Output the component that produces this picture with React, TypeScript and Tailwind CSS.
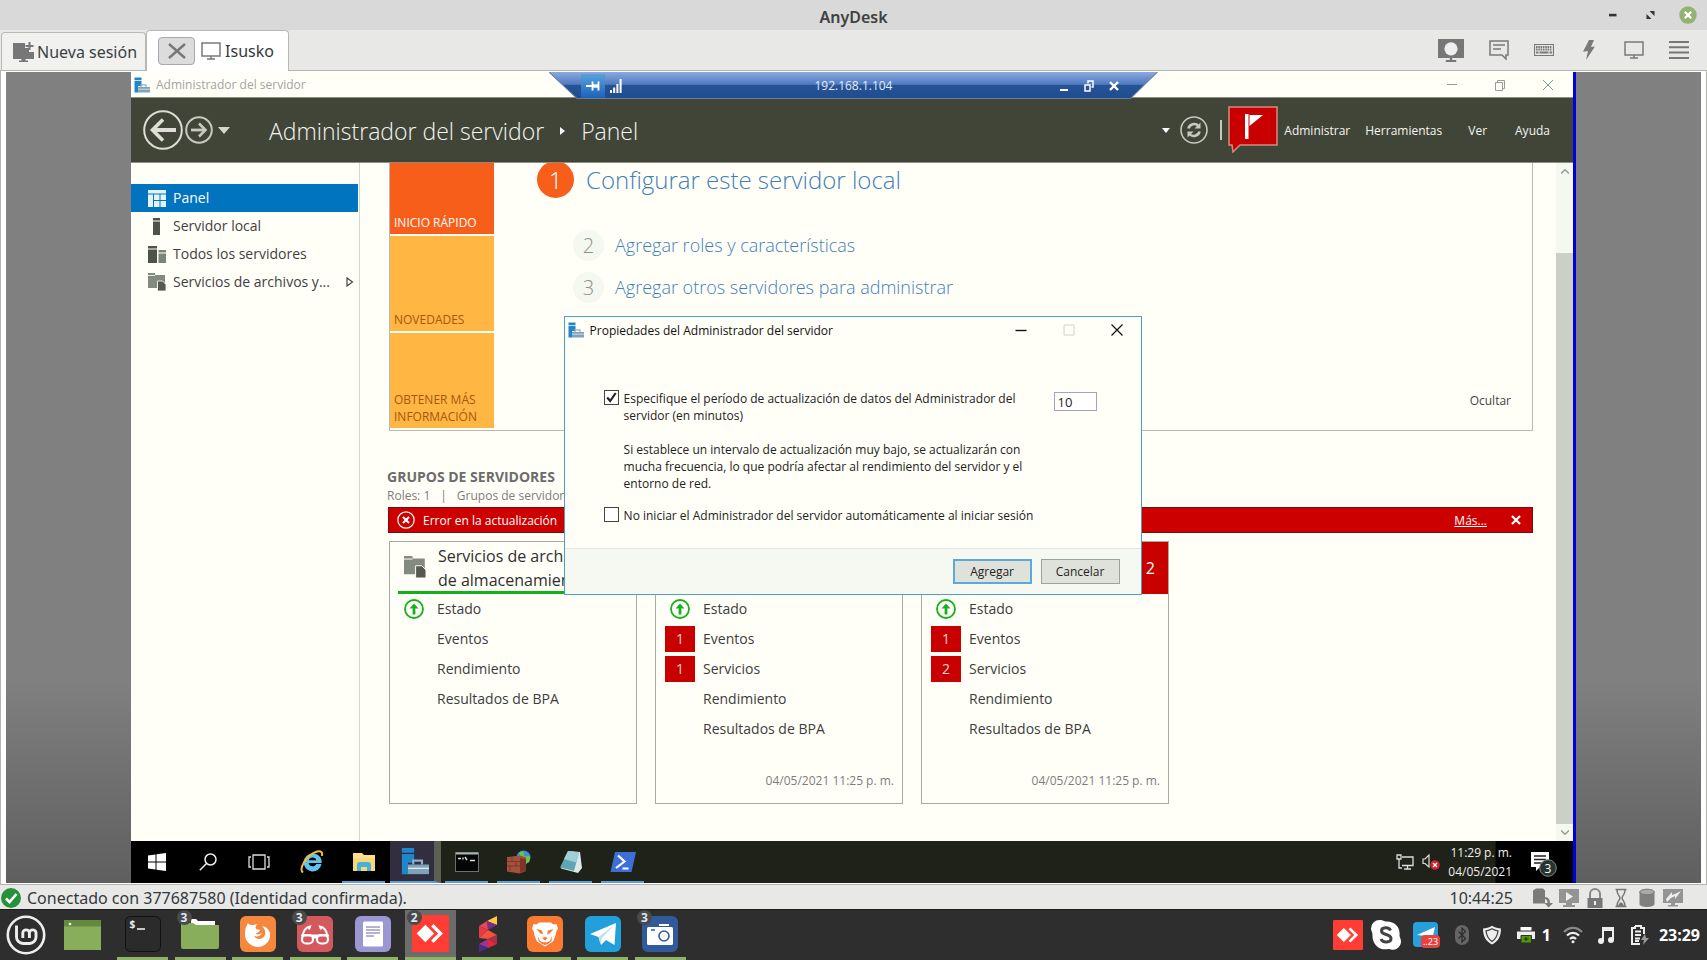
import React from "react";

type Row = { label: string; ok?: boolean; count?: number };
type Tile = { id: string; title?: string[]; badge?: string; rows: Row[]; date?: string };

const serverTiles: Tile[] = [
  {
    id: "archivos",
    title: ["Servicios de arch", "de almacenamien"],
    rows: [
      { label: "Estado", ok: true },
      { label: "Eventos" },
      { label: "Rendimiento" },
      { label: "Resultados de BPA" },
    ],
  },
  {
    id: "local",
    rows: [
      { label: "Estado", ok: true },
      { label: "Eventos", count: 1 },
      { label: "Servicios", count: 1 },
      { label: "Rendimiento" },
      { label: "Resultados de BPA" },
    ],
    date: "04/05/2021 11:25 p. m.",
  },
  {
    id: "todos",
    badge: "2",
    rows: [
      { label: "Estado", ok: true },
      { label: "Eventos", count: 1 },
      { label: "Servicios", count: 2 },
      { label: "Rendimiento" },
      { label: "Resultados de BPA" },
    ],
    date: "04/05/2021 11:25 p. m.",
  },
];

/* ---------- AnyDesk window ---------- */

function MonitorIcon({ className = "h-[18px] w-5" }: { className?: string }) {
  return (
    <svg viewBox="0 0 20 18" className={className} fill="none" stroke="#7a7a7a" strokeWidth="1.5">
      <rect x="1" y="1" width="18" height="13" />
      <path d="M10 14v3M6 17h8" />
    </svg>
  );
}

function TitleBar() {
  return (
    <header className="grid h-[30px] grid-cols-[1fr_auto_1fr] items-center bg-[#d9d9d9]">
      <span />
      <h1 className="pt-[3px] text-base font-semibold leading-5 text-[#404040]">AnyDesk</h1>
      <div className="flex items-center justify-end gap-[22px] pr-2.5">
        <button aria-label="Minimizar" className="flex size-4 items-center justify-center">
          <svg viewBox="0 0 16 16" className="size-4"><rect x="6" y="6.8" width="7.5" height="2.6" fill="#333" /></svg>
        </button>
        <button aria-label="Restaurar" className="flex size-4 items-center justify-center">
          <svg viewBox="0 0 16 16" className="size-4" fill="#333"><path d="M8.500 4h5v5zM5.500 7v5h5z" /></svg>
        </button>
        <button aria-label="Cerrar" className="flex size-[18px] items-center justify-center">
          <svg viewBox="0 0 18 18" className="size-[18px]">
            <circle cx="9" cy="9" r="8.7" fill="#92b372" />
            <path d="M5.8 5.8l6.4 6.4M12.2 5.8l-6.4 6.4" stroke="#fff" strokeWidth="2.2" />
          </svg>
        </button>
      </div>
    </header>
  );
}

function TabBar() {
  return (
    <div className="flex h-[41px] items-end border-b border-[#b4b4b0] bg-[#e8e8e6]">
      <button className="ml-px flex h-[38px] items-center gap-[3px] rounded-t border border-b-0 border-[#b8b8b4] bg-[#f1f1f0] pl-[11px] pr-2 text-base leading-5 text-[#3a3f44]">
        <svg viewBox="0 0 21 20" className="h-5 w-[21px]" fill="#777">
          <path d="M0 1h12v5h4v4h5v7h-8.500v1.500H15V20H6v-1.500h2.500V17H0z" />
          <path d="M16.500 0v8M12.500 4h8" stroke="#777" strokeWidth="2" />
        </svg>
        Nueva sesión
      </button>
      <div className="-mb-px flex h-[41px] items-center gap-1 rounded-t border border-b-0 border-[#b8b8b4] bg-white pl-[11px] pr-3.5">
        <button aria-label="Cerrar sesión" className="mr-0.5 flex h-7 w-[37px] items-center justify-center rounded border border-[#a9a9a9] bg-[#dcdcdc]">
          <svg viewBox="0 0 18 16" className="h-4 w-[18px]" stroke="#777" strokeWidth="2.4"><path d="M1 1l16 14M17 1L1 15" /></svg>
        </button>
        <MonitorIcon />
        <span className="text-base leading-5 text-[#33383d]">Isusko</span>
      </div>
      <div className="ml-auto flex h-full items-center gap-[25px] pr-[18px]">
        <button aria-label="Grabar">
          <svg viewBox="0 0 26 23" className="h-[23px] w-[26px]" fill="#777">
            <path d="M0 0h26v19H0z" /><circle cx="13" cy="9.8" r="6.6" fill="#eee" /><path d="M11.8 19h2.400v2h4v2H7.800v-2h4z" />
          </svg>
        </button>
        <button aria-label="Chat">
          <svg viewBox="0 0 20 20" className="h-5 w-5" fill="none" stroke="#7a7a7a" strokeWidth="1.5">
            <path d="M1 1h18v14h-2v4l-4-4H1zM4 5h12M4 9h8" />
          </svg>
        </button>
        <button aria-label="Teclado">
          <svg viewBox="0 0 20 12" className="h-3 w-5" fill="none" stroke="#7a7a7a">
            <path d="M.5.5h19v11H.5z" strokeWidth="1.2" />
            <path d="M2 3h16M2 5.500h16" strokeWidth="1.8" strokeDasharray="1.6 .7" />
            <path d="M2 8.500h2.500M5.500 8.500h9M15.500 8.500H18" strokeWidth="1.8" />
          </svg>
        </button>
        <button aria-label="Acciones" className="px-1">
          <svg viewBox="0 0 12 20" className="h-5 w-3" fill="#7a7a7a"><path d="M6 0h5L8 7l4-.5L3 20l2-9-5 .8z" /></svg>
        </button>
        <button aria-label="Pantalla"><MonitorIcon /></button>
        <button aria-label="Menú">
          <svg viewBox="0 0 20 18" className="h-[18px] w-5" stroke="#777" strokeWidth="2"><path d="M0 1h20M0 6.300h20M0 11.600h20M0 17h20" /></svg>
        </button>
      </div>
    </div>
  );
}

function StatusBar() {
  return (
    <div className="flex h-[25px] items-center border-t border-[#b4b4b0] bg-[#e8e8e6] pl-px pr-6 pt-px">
      <svg viewBox="0 0 20 20" className="size-5">
        <circle cx="10" cy="10" r="10" fill="#27913a" />
        <path d="M5 10.500l3.500 3.500L15.500 6" stroke="#fff" strokeWidth="2.6" fill="none" />
      </svg>
      <span className="ml-1.5 text-base leading-5 text-[#33383d]">Conectado con 377687580 (Identidad confirmada).</span>
      <span className="ml-auto text-base leading-5 text-[#33383d]">10:44:25</span>
      <div className="ml-5 flex items-center gap-1.5">
        <svg viewBox="0 0 20 20" className="size-5" fill="#7a7a7a"><path d="M0 2.500L3 .500h7l2 2v13H0z" /><path d="M12 9c3.500 0 5 3 5 6h3l-4.500 4.500L11.500 15h3c0-2-.5-3.500-2.500-4z" /></svg>
        <svg viewBox="0 0 20 20" className="size-5"><path d="M0 1h20v14h-7v2h3v2H4v-2h3v-2H0z" fill="#949494" /><path d="M7 4l7 4.500L7 13z" fill="#eee" /></svg>
        <svg viewBox="0 0 20 20" className="size-5"><path d="M2.500 10h15v10h-15z" fill="#777" /><path d="M5 10V6a5 5 0 0110 0v4" fill="none" stroke="#888" strokeWidth="2" /><path d="M10 13v4" stroke="#eee" strokeWidth="2" /></svg>
        <svg viewBox="0 0 20 20" className="size-5" fill="none" stroke="#777" strokeWidth="1.5"><path d="M4.500 1.500h11M4.500 18.500h11M6 2c0 5 3 6 3 8s-3 3-3 8M14 2c0 5-3 6-3 8s3 3 3 8" /><path d="M7 18c1-3 2-3 3-4 1 1 2 1 3 4z" fill="#777" stroke="none" /></svg>
        <svg viewBox="0 0 20 20" className="size-5"><path d="M2.500 4v12c0 4 15 4 15 0V4z" fill="#808080" /><ellipse cx="10" cy="4" rx="7.3" ry="2.8" fill="#aaa" stroke="#777" /></svg>
        <svg viewBox="0 0 20 20" className="size-5"><path d="M0 1h20v14h-8v2h3v1.500H5V17h3v-2H0z" fill="#949494" /><path d="M3 11l6-7v3l3-1 6-3-6 8v-3l-4 2-4 4z" fill="#eee" /></svg>
      </div>
    </div>
  );
}

/* ---------- Remote Windows desktop ---------- */

function ServerManagerIcon({ className = "size-4" }: { className?: string }) {
  return (
    <svg viewBox="0 0 16 16" className={className}>
      <path d="M.5.5h7v2.800h-7zM.5 4h7v5H4v6.500H.5z" fill="#1f87c9" />
      <path d="M7 10V7.800h5V10" fill="none" stroke="#8fb0c4" strokeWidth="1.2" />
      <path d="M4 10h12v5.500H4z" fill="#7fa3b8" />
      <path d="M4 12.200h12" stroke="#dfeaf0" strokeWidth=".8" />
    </svg>
  );
}

function FolderServerIcon({ className = "size-[18px]" }: { className?: string }) {
  return (
    <svg viewBox="0 0 18 18" className={className}>
      <path d="M0 0h7v2h10v8H9v5H0z" fill="#858a7e" />
      <path d="M0 2.500h7" stroke="#fffff8" strokeWidth=".8" />
      <path d="M9.500 8h5l3.500 3.500V18H9.500z" fill="#55594e" stroke="#fffff8" strokeWidth=".8" />
    </svg>
  );
}

function RemoteTitle() {
  return (
    <div className="flex h-[25px] items-center bg-[#fffff8] pl-[3px] text-[#a3a3a3]">
      <ServerManagerIcon />
      <span className="ml-1.5 text-xs leading-4">Administrador del servidor</span>
      <div className="ml-auto flex items-center gap-9 pr-[19px]">
        <svg viewBox="0 0 12 12" className="size-3" stroke="#9a9a94"><path d="M1 5.500h10" /></svg>
        <svg viewBox="0 0 12 12" className="size-3" fill="none" stroke="#9a9a94"><path d="M1.500 3.500h7v8h-7zM3.500 3.500v-2h7v8h-2" /></svg>
        <svg viewBox="0 0 12 12" className="size-3" stroke="#7f9899"><path d="M1 1l10 10M11 1L1 11" /></svg>
      </div>
    </div>
  );
}

function ConnectionBar() {
  return (
    <div className="absolute left-[29%] right-[28.8%] top-0 h-[27px] text-white">
      <svg viewBox="0 0 608 27" preserveAspectRatio="none" className="absolute inset-0 size-full">
        <defs>
          <linearGradient id="rdp" x1="0" y1="0" x2="0" y2="1">
            <stop offset="0" stopColor="#8aaae0" />
            <stop offset=".47" stopColor="#4f7abf" />
            <stop offset=".48" stopColor="#265497" />
            <stop offset="1" stopColor="#1f4c8f" />
          </linearGradient>
        </defs>
        <path d="M0 0h608l-27 26.500H28z" fill="url(#rdp)" />
        <path d="M0 0l28 26.500h553L608 0" fill="none" stroke="#6a7f9f" />
      </svg>
      <div className="relative grid h-[27px] grid-cols-[1fr_auto_1fr] items-center">
        <div className="flex items-center pl-8">
          <button aria-label="Anclar" className="flex h-6 w-6 items-center justify-center bg-linear-to-b from-[#5aa2dc] to-[#1c62b8]">
            <svg viewBox="0 0 14 12" className="h-3 w-3.5" stroke="#fff" strokeWidth="1.8" fill="none"><path d="M0 6h6M6.500 1.500v9M12.500 1.500v9" /><path d="M6 6h6" strokeWidth="3.4" /></svg>
          </button>
          <svg viewBox="0 0 12 14" className="ml-[5px] h-3.5 w-3 fill-white"><path d="M0 11h2v3H0zM3.200 8.500h2V14h-2zM6.400 5h2v9h-2zM9.600 0h2v14h-2z" /></svg>
        </div>
        <span className="pt-px text-xs leading-4 text-[#e3ecf7]">192.168.1.104</span>
        <div className="flex items-center justify-end gap-[15px] pr-[39px]">
          <svg viewBox="0 0 10 12" className="h-3 w-2.5"><path d="M1 10h8" stroke="#fff" strokeWidth="2" /></svg>
          <svg viewBox="0 0 10 12" className="h-3 w-2.5" fill="none" stroke="#fff" strokeWidth="1.5"><path d="M1 5h5v6H1zM4 3.500V1h5v6H7.500" /></svg>
          <svg viewBox="0 0 10 10" className="size-2.5"><path d="M1 1l8 8M9 1L1 9" stroke="#fff" strokeWidth="2.4" /></svg>
        </div>
      </div>
    </div>
  );
}

function NavHeader() {
  return (
    <div className="flex h-[66px] items-center border-y border-[#8b8d82] bg-[#414538] pl-3 text-[#f4f4f0]">
      <button aria-label="Atrás">
        <svg viewBox="0 0 40 40" className="size-10" fill="none" stroke="#deded6">
          <circle cx="20" cy="20" r="18.8" strokeWidth="2" />
          <path d="M33 20H10" strokeWidth="4" /><path d="M20 9.500L9.500 20 20 30.500" strokeWidth="3.6" />
        </svg>
      </button>
      <button aria-label="Adelante" className="ml-0.5">
        <svg viewBox="0 0 28 28" className="size-7" fill="none" stroke="#c9c9c0">
          <circle cx="14" cy="14" r="12.8" strokeWidth="2" />
          <path d="M6 14h14" strokeWidth="2.8" /><path d="M14 7.500l6.500 6.500-6.500 6.500" strokeWidth="2.6" />
        </svg>
      </button>
      <button aria-label="Historial" className="ml-[5px]">
        <svg viewBox="0 0 12 7" className="h-[7px] w-3 fill-[#d6d6ce]"><path d="M0 0h12L6 7z" /></svg>
      </button>
      <nav className="ml-[39px] flex items-center pt-0.5 text-[23px] font-light leading-8">
        <span>Administrador del servidor</span>
        <svg viewBox="0 0 5 8" className="mx-4 h-2 w-[5px] fill-white"><path d="M0 0l5 4-5 4z" /></svg>
        <span>Panel</span>
      </nav>
      <div className="ml-auto flex items-center pr-[23px] text-xs leading-5">
        <svg viewBox="0 0 8 5" className="h-[5px] w-2 fill-white"><path d="M0 0h8L4 5z" /></svg>
        <button aria-label="Actualizar" className="ml-2.5">
          <svg viewBox="0 0 28 28" className="size-7" fill="none" stroke="#c6c9bf">
            <circle cx="14" cy="14" r="13" strokeWidth="1.6" />
            <path d="M8.500 12.500c1-4.500 7-6 10-2.500M19.500 15.500c-1 4.500-7 6-10 2.500" strokeWidth="2.6" />
            <path d="M20.500 6.500v6h-6zM7.500 21.500v-6h6z" fill="#c6c9bf" stroke="none" />
          </svg>
        </button>
        <span className="ml-3 h-5 w-0.5 bg-[#c6c9bf]" />
        <button aria-label="Notificaciones" className="ml-1.5">
          <svg viewBox="0 0 50 48" className="h-12 w-[50px]">
            <path d="M1 1h48v38H12l-7 7-1-7H1z" fill="#c80000" stroke="#d58a80" strokeWidth="1.5" />
            <path d="M17 8h3.500v25H17zM21.500 9H35L21.500 20z" fill="#fff" />
          </svg>
        </button>
        <button className="ml-1.5 pt-px">Administrar</button>
        <button className="ml-[15px] pt-px">Herramientas</button>
        <button className="ml-[26px] pt-px">Ver</button>
        <button className="ml-7 pt-px">Ayuda</button>
      </div>
    </div>
  );
}

function Sidebar() {
  const row = "flex h-7 items-center gap-[7px] pl-[17px] text-sm leading-5";
  return (
    <aside className="w-[229px] shrink-0 border-r border-[#d2d5cc] pt-[21px] text-[#3f3f3f]">
      <ul className="flex flex-col">
        <li className="mr-px flex h-7 items-center gap-[7px] bg-[#0074bf] pl-[17px] text-sm leading-5 text-white">
          <svg viewBox="0 0 18 17" className="h-[17px] w-[18px] fill-[#e4f3fb]"><path d="M0 0h18v3.500H0zM0 4.500h5V17H0zM6 4.500h5.500V10H6zM12.500 4.500H18V10h-5.500zM6 11h5.500v6H6zM12.500 11H18v6h-5.500z" /></svg>
          <a href="#panel">Panel</a>
        </li>
        <li className={row}>
          <svg viewBox="0 0 18 17" className="h-[17px] w-[18px] fill-[#4e5247]"><path d="M5 0h7v2.500H5zM5 3.500h7V17H5z" /></svg>
          <a href="#local">Servidor local</a>
        </li>
        <li className={row}>
          <svg viewBox="0 0 18 17" className="h-[17px] w-[18px]" fill="#4e5247"><path d="M0 0h9v2.500H0zM0 3.500h9V17H0z" /><path d="M10.500 4H18v2.500h-7.500zM10.500 7.500H18V17h-7.500z" fill="#7e8377" /></svg>
          <a href="#todos">Todos los servidores</a>
        </li>
        <li className={row}>
          <FolderServerIcon />
          <a href="#archivos">Servicios de archivos y...</a>
          <svg viewBox="0 0 8 10" className="ml-auto mr-[5px] h-2.5 w-2" fill="none" stroke="#444" strokeWidth="1.2"><path d="M1 1l5.500 4L1 9z" /></svg>
        </li>
      </ul>
    </aside>
  );
}

function WelcomePanel() {
  const steps = [
    { n: "2", text: "Agregar roles y características" },
    { n: "3", text: "Agregar otros servidores para administrar" },
  ];
  return (
    <section className="flex h-[268px] border border-t-0 border-[#b9bbb2]">
      <div className="flex w-[104px] shrink-0 flex-col gap-0.5 text-xs leading-[17px] text-[#a8560c]">
        <button className="flex h-[71px] items-end bg-[#f65e1a] px-1 pb-[3px] text-left text-white">INICIO RÁPIDO</button>
        <button className="flex h-[95px] items-end bg-[#ffb643] px-1 pb-[3px] text-left">NOVEDADES</button>
        <button className="flex h-[95px] items-end bg-[#ffb643] px-1 pb-[3px] text-left">OBTENER MÁS INFORMACIÓN</button>
      </div>
      <div className="relative flex-1 overflow-hidden pl-[43px] text-[#3f7fb9]">
        <a href="#configurar" className="-mt-0.5 flex items-center gap-3 text-2xl font-light leading-9">
          <span className="flex size-[37px] items-center justify-center rounded-full bg-[#f65e1a] text-2xl text-white">1</span>
          Configurar este servidor local
        </a>
        <ul className="mt-8 flex flex-col gap-[11px] pl-9 text-lg font-light leading-[31px]">
          {steps.map((s) => (
            <li key={s.n}>
              <a href="#paso" className="flex items-center gap-[11px]">
                <span className="flex size-[31px] items-center justify-center rounded-full bg-[#f5f8ee] text-xl text-[#8f8f8f]">{s.n}</span>
                {s.text}
              </a>
            </li>
          ))}
        </ul>
        <button className="absolute bottom-[19px] right-[21px] text-xs leading-5 text-[#444]">Ocultar</button>
      </div>
    </section>
  );
}

function ServerTile({ tile }: { tile: Tile }) {
  return (
    <article className="flex h-[263px] w-[248px] flex-col border border-[#a9aba2] bg-[#fffff8] text-[#3d3d3d]">
      {tile.title ? (
        <div className="mx-2 flex h-[52px] items-center border-b-[3px] border-[#14b01c] pl-1.5 text-[#2f2f2f]">
          <FolderServerIcon className="size-[22px]" />
          <h3 className="ml-3 whitespace-nowrap pt-0.5 text-base leading-6">
            {tile.title[0]}
            <br />
            {tile.title[1]}
          </h3>
        </div>
      ) : (
        <div className="flex h-[52px] items-center justify-end bg-[#c80000] pr-[13px] text-base text-white">
          {tile.badge && <span>{tile.badge}</span>}
        </div>
      )}
      <ul className="mt-0.5 flex flex-col gap-1">
        {tile.rows.map((r) => (
          <li key={r.label} className="flex h-[26px] items-center pl-[9px] text-sm leading-5">
            <span className="flex h-[26px] w-[30px] items-center justify-center">
              {r.ok && (
                <svg viewBox="0 0 20 20" className="size-5" fill="none">
                  <circle cx="10" cy="10" r="9" stroke="#18b01e" strokeWidth="1.8" />
                  <path d="M10 15.500V8" stroke="#18b01e" strokeWidth="2.8" />
                  <path d="M5.500 9.500L10 4.500l4.500 5h-2.800L10 8l-1.700 1.500z" fill="#18b01e" />
                </svg>
              )}
              {r.count !== undefined && (
                <span className="flex size-full items-center justify-center bg-[#c80000] text-sm text-[#f1d6d2]">{r.count}</span>
              )}
            </span>
            <span className="ml-2">{r.label}</span>
          </li>
        ))}
      </ul>
      {tile.date && <p className="mb-3 mr-2 mt-auto text-right text-xs leading-5 text-[#7d7d7d]">{tile.date}</p>}
    </article>
  );
}

function CheckBox({ id, checked = false }: { id: string; checked?: boolean }) {
  return (
    <span className="relative size-[15px] shrink-0">
      <input id={id} type="checkbox" defaultChecked={checked} className="peer block size-[15px] appearance-none border border-[#444] bg-white" />
      <svg viewBox="0 0 15 15" className="pointer-events-none absolute inset-0 hidden size-[15px] peer-checked:block" fill="none" stroke="#222" strokeWidth="2.2">
        <path d="M3.200 7.500l3 3.500 5.500-8" />
      </svg>
    </span>
  );
}

function PropertiesDialog() {
  return (
    <div
      role="dialog"
      aria-label="Propiedades del Administrador del servidor"
      className="absolute left-[30%] top-[244px] flex h-[279px] w-[578px] flex-col border border-[#4d9fc8] bg-[#fffff8] text-xs leading-[17px] text-[#222]"
    >
      <div className="flex h-[26px] items-center pl-[3px]">
        <ServerManagerIcon />
        <span className="ml-1.5 text-[#111]">Propiedades del Administrador del servidor</span>
        <div className="ml-auto flex items-center gap-9 pr-[18px]">
          <button aria-label="Minimizar"><svg viewBox="0 0 12 12" className="size-3" stroke="#111"><path d="M.5 6.500h11" strokeWidth="1.4" /></svg></button>
          <button aria-label="Maximizar" disabled><svg viewBox="0 0 12 12" className="size-3" fill="none" stroke="#d0d3ca"><path d="M1 1h10v10H1z" /></svg></button>
          <button aria-label="Cerrar"><svg viewBox="0 0 12 12" className="size-3" stroke="#111" strokeWidth="1.2"><path d="M.5.5l11 11M11.500.5l-11 11" /></svg></button>
        </div>
      </div>
      <div className="flex flex-1 flex-col pl-[39px] pr-11 pt-[47px]">
        <div className="flex items-start">
          <CheckBox id="periodo" checked />
          <label htmlFor="periodo" className="ml-[5px] w-[400px]">
            Especifique el período de actualización de datos del Administrador del
            <br />
            servidor (en minutos)
          </label>
          <input
            aria-label="Minutos"
            defaultValue="10"
            className="ml-auto mt-0.5 h-[19px] w-[43px] border border-[#a7a3b5] bg-white px-[3px] text-[13px] text-[#222]"
          />
        </div>
        <p className="mt-[17px] w-[430px] pl-5">
          Si establece un intervalo de actualización muy bajo, se actualizarán con
          <br />
          mucha frecuencia, lo que podría afectar al rendimiento del servidor y el
          <br />
          entorno de red.
        </p>
        <div className="mt-[15px] flex items-start">
          <CheckBox id="inicio" />
          <label htmlFor="inicio" className="ml-[5px] whitespace-nowrap">
            No iniciar el Administrador del servidor automáticamente al iniciar sesión
          </label>
        </div>
      </div>
      <div className="flex h-[46px] items-center justify-end gap-[9px] border-t border-[#e5e8df] bg-[#f6f9f1] pr-[21px]">
        <button className="h-[25px] w-[79px] border-2 border-[#5fa8d8] bg-[#dfe2da]">Agregar</button>
        <button className="h-[25px] w-[79px] border border-[#a0a299] bg-[#dfe2da]">Cancelar</button>
      </div>
    </div>
  );
}

function ServerManager() {
  return (
    <div className="flex flex-1 bg-[#fffff8]">
      <Sidebar />
      <main className="min-w-0 flex-1 overflow-hidden pl-[27px] pr-[23px]">
        <div className="pl-0.5">
          <WelcomePanel />
        </div>
        <h2 className="mt-9 text-sm font-bold leading-5 text-[#6c6c6c]">GRUPOS DE SERVIDORES</h2>
        <p className="flex gap-2.5 text-xs leading-[18px] text-[#7d7d7d]">
          <span>Roles: 1</span>
          <span>|</span>
          <span>Grupos de servidore</span>
        </p>
        <div className="ml-px mt-0.5 flex h-[26px] items-center border border-[#7c0b0b] bg-[#cd0000] pl-2 pr-[11px] text-xs leading-5 text-white">
          <svg viewBox="0 0 18 18" className="size-[18px]" fill="none" stroke="#fff">
            <circle cx="9" cy="9" r="8.2" strokeWidth="1.2" /><path d="M6 6l6 6M12 6l-6 6" strokeWidth="2" />
          </svg>
          <span className="ml-2 pt-px">Error en la actualización</span>
          <a href="#mas" className="ml-auto pt-px underline">Más...</a>
          <button aria-label="Descartar" className="ml-6">
            <svg viewBox="0 0 10 10" className="size-2.5"><path d="M1 1l8 8M9 1L1 9" stroke="#fff" strokeWidth="2.2" /></svg>
          </button>
        </div>
        <div className="mb-[37px] ml-0.5 mt-2 flex gap-[18px]">
          {serverTiles.map((t) => (
            <ServerTile key={t.id} tile={t} />
          ))}
        </div>
      </main>
      <div className="flex w-[17px] shrink-0 flex-col items-center bg-[#f5f8ef] py-1.5">
        <svg viewBox="0 0 8 5" className="h-[5px] w-2" fill="none" stroke="#999" strokeWidth="1.5"><path d="M0 4.500L4 .8l4 3.700" /></svg>
        <span className="mb-1.5 mt-[79px] w-full flex-1 bg-[#cccfc6]" />
        <svg viewBox="0 0 8 5" className="h-[5px] w-2" fill="none" stroke="#999" strokeWidth="1.5"><path d="M0 .5L4 4.200 8 .5" /></svg>
      </div>
    </div>
  );
}

function RemoteTaskbar() {
  const slot = "flex h-full w-[43px] items-center justify-center border-b-2 border-[#5b9fdc] pt-0.5";
  const plain = "flex h-full w-[51px] items-center justify-center";
  return (
    <div className="flex h-[42px] items-center bg-linear-to-r from-[#1f2219] from-[94.6%] to-black to-[94.7%] text-white">
      <div className="flex h-full w-[259px] items-center bg-black">
        <button aria-label="Inicio" className={plain}>
          <svg viewBox="0 0 18 18" className="size-[18px] fill-white"><path d="M0 2.500L7.500 1.500V8.500H0zM8.500 1.300L18 0v8.500H8.500zM0 9.500h7.500v7L0 15.500zM8.500 9.500H18V18l-9.500-1.300z" /></svg>
        </button>
        <button aria-label="Buscar" className={plain}>
          <svg viewBox="0 0 18 18" className="size-[18px]" fill="none" stroke="#eee" strokeWidth="1.5"><circle cx="11.5" cy="6.5" r="5.5" /><path d="M7.500 10.500L.8 17.200" /></svg>
        </button>
        <button aria-label="Vista de tareas" className={plain}>
          <svg viewBox="0 0 22 16" className="h-4 w-[22px]" fill="none" stroke="#ddd" strokeWidth="1.3"><path d="M5 1h12v14H5zM3 3H1v10h2M19 3h2v10h-2" /></svg>
        </button>
        <button aria-label="Internet Explorer" className={`${plain} ml-0.5`}>
          <svg viewBox="0 0 24 24" className="size-6">
            <path d="M12.500 3.500a9 9 0 109 10.500h-5.200c-1.300 3.400-7.300 3-7.600-1h13c.4-5.500-3.500-9.500-9.200-9.500zM8.900 10.200c.6-3.600 6.900-3.600 7.400 0z" fill="#5fc3f0" />
            <path d="M3 22.500C-1.500 19 6 5 17 1.500c4-1.200 6 .8 4.800 4.500" fill="none" stroke="#f2bd33" strokeWidth="2" />
          </svg>
        </button>
        <button aria-label="Explorador" className={`${slot} ml-[5px]`}>
          <svg viewBox="0 0 24 22" className="h-[22px] w-6"><path d="M1 2h9l2 2h11v16H1z" fill="#fbe08d" /><path d="M1 7h22v13H1z" fill="#f8d775" /><path d="M5 20v-7a3 3 0 013-2h8a3 3 0 013 2v7h-4v-4H9v4z" fill="#48b0dd" /></svg>
        </button>
      </div>
      <button aria-label="Administrador del servidor" className="flex h-full w-[51px] items-center justify-center border-b-2 border-r-[7px] border-b-[#5b9fdc] border-r-[#5c6052] bg-[#322e40] pl-1.5">
        <ServerManagerIcon className="size-7" />
      </button>
      <div className="ml-1 flex h-full gap-[9px]">
        <button aria-label="Símbolo del sistema" className={slot}>
          <svg viewBox="0 0 24 20" className="h-5 w-6"><rect x=".5" y=".5" width="23" height="19" fill="#050505" stroke="#67716e" /><path d="M1 1.500h22" stroke="#aab5b5" strokeWidth="2" /><path d="M3 6.500h3M8 5.500v2M10 5l2 3M15 8.500h5" stroke="#ddd" strokeWidth="1.4" /></svg>
        </button>
        <button aria-label="Firewall" className={slot}>
          <svg viewBox="0 0 26 24" className="h-6 w-[26px]">
            <circle cx="17.5" cy="7.5" r="7" fill="#3b8fd6" /><path d="M13 3c3-3 6-1 5 1s2 3 4 2 3 3 1 6l-4 2z" fill="#6cc24a" />
            <path d="M1 7l13-1.500 6 2V21l-6 2.500L1 21.500z" fill="#a5503c" /><path d="M14 8v15l6-2.500V9z" fill="#7c3527" />
            <path d="M1 11.500h13M1 16h13M6 7v4.500M10 11.500V16M4 16v5" stroke="#793526" strokeWidth=".9" />
          </svg>
        </button>
        <button aria-label="Bloc de notas" className={slot}>
          <svg viewBox="0 0 24 24" className="size-6"><path d="M10 1l11 1 2 16-4 5-17-4.500z" fill="#dfe9e6" /><path d="M9 1l11 1.500L15 21 1 17.500z" fill="#5fa6b4" /><path d="M9 1l11 1.500-3 10L5 9z" fill="#9fd0d6" /></svg>
        </button>
        <button aria-label="PowerShell" className={slot}>
          <svg viewBox="0 0 26 20" className="h-5 w-[26px]"><path d="M5 0h21l-4.500 20H.5z" fill="#3d6fd8" /><path d="M8 3.500l6.500 6L6 16M12.500 16.500h6" fill="none" stroke="#fff" strokeWidth="2.2" /></svg>
        </button>
      </div>
      <div className="ml-auto flex h-full items-center gap-2">
        <svg viewBox="0 0 18 16" className="h-4 w-[18px]" fill="none" stroke="#ddd" strokeWidth="1.3"><path d="M6 3h11v8.500H6M11.500 11.500V15M8 15h7M1 1h4v4H1zM3 5v9h3" /></svg>
        <svg viewBox="0 0 18 16" className="h-4 w-[18px]"><path d="M1 5h2l4-4v12L3 9.500H1z" fill="none" stroke="#ddd" strokeWidth="1.2" /><circle cx="13" cy="11" r="4.8" fill="#d1202d" /><path d="M11 9l4 4M15 9l-4 4" stroke="#fff" strokeWidth="1.3" /></svg>
        <p className="text-right text-xs leading-[19px] text-[#eee]">
          11:29 p. m.
          <br />
          04/05/2021
        </p>
      </div>
      <div className="flex h-full w-[61px] items-center pl-[19px] pt-1">
        <button aria-label="Centro de actividades">
          <svg viewBox="0 0 26 28" className="h-7 w-[26px]">
            <path d="M0 2h18v15H9l-4 4v-4H0z" fill="#fff" /><path d="M3 6h12M3 9.500h12M3 13h8" stroke="#222" strokeWidth="1.3" />
            <circle cx="17" cy="18" r="8.3" fill="#26332f" stroke="#7f8c88" />
            <text x="17" y="22.500" textAnchor="middle" fontSize="12" fill="#fff">3</text>
          </svg>
        </button>
      </div>
    </div>
  );
}

function RemoteDesktop() {
  return (
    <div className="relative flex min-w-0 flex-1 flex-col border-r-[3px] border-[#0000dd] font-['Open_Sans','Noto_Sans',sans-serif]">
      <RemoteTitle />
      <NavHeader />
      <ServerManager />
      <RemoteTaskbar />
      <ConnectionBar />
      <PropertiesDialog />
    </div>
  );
}

/* ---------- Linux Mint panel ---------- */

function CountBadge({ n }: { n: string }) {
  return (
    <span className="absolute left-0.5 top-0 flex size-[15px] items-center justify-center rounded-full bg-[#4a4a4a] text-xs font-bold leading-[15px] text-[#dbe8f5]">
      {n}
    </span>
  );
}

function AnyDeskLogo({ className }: { className: string }) {
  return (
    <svg viewBox="0 0 36 36" className={className}>
      <rect width="36" height="36" rx="1.5" fill="#ff3d34" />
      <path d="M13 9.500l8.500 8.500-8.500 8.500L4.500 18z" fill="#fff" />
      <path d="M19.800 10l8 8-8 8" fill="none" stroke="#fff" strokeWidth="3.2" />
    </svg>
  );
}

const dockApps: { name: string; badge?: string; active?: boolean; icon: React.ReactNode }[] = [
  {
    name: "Terminal",
    icon: (
      <svg viewBox="0 0 36 36" className="size-9">
        <rect x=".5" y=".5" width="35" height="35" rx="5" fill="#2b2b2b" stroke="#111" />
        <text x="4.500" y="12" fontSize="10" fontWeight="700" fill="#eee">$</text>
        <path d="M12 13h8" stroke="#eee" strokeWidth="1.6" />
      </svg>
    ),
  },
  {
    name: "Archivos",
    badge: "3",
    icon: (
      <svg viewBox="0 0 38 30" className="h-[30px] w-[38px]">
        <path d="M10 0h5l2 2h17v5H10z" fill="#fff" /><path d="M0 4h12l3 2h23v22a2 2 0 01-2 2H2a2 2 0 01-2-2z" fill="#88ae5c" />
      </svg>
    ),
  },
  {
    name: "Firefox",
    icon: (
      <svg viewBox="0 0 36 36" className="size-9">
        <rect width="36" height="36" rx="6" fill="#f5883d" />
        <path d="M6 11c1-1 1-3 2-4 1 2 3 2 5 2l5-1c-2 1-3 3-2 5l4 1c0 2-3 2-4 4 2 1 4 0 6-1-1 3-5 4-8 3 2 4 9 4 11-1 1-4-1-7-3-9 5 1 7 4 8 7 1 8-5 14-12 14S5 25 5 19c0-3 0-5 1-8z" fill="#fff" />
      </svg>
    ),
  },
  {
    name: "Visor",
    badge: "3",
    icon: (
      <svg viewBox="0 0 36 36" className="size-9">
        <rect width="36" height="36" rx="6" fill="#d4595d" />
        <path d="M5.500 21C6 15 8 11.500 13 10.500l-1 3M30.500 21C30 15 28 11.500 23 10.500l1 3" fill="none" stroke="#fff" strokeWidth="2" />
        <rect x="5" y="19" width="11" height="8.5" rx="4" fill="none" stroke="#fff" strokeWidth="2.2" />
        <rect x="20" y="19" width="11" height="8.5" rx="4" fill="none" stroke="#fff" strokeWidth="2.2" />
        <path d="M16 21.500h4M4 19.500h28" stroke="#fff" strokeWidth="1.8" />
      </svg>
    ),
  },
  {
    name: "Editor de texto",
    icon: (
      <svg viewBox="0 0 36 36" className="size-9">
        <rect width="36" height="36" rx="6" fill="#9b97d3" />
        <rect x="8" y="5.5" width="20" height="25" rx="1.5" fill="#fff" />
        <path d="M11 11h14M11 14h14M11 17h14M11 20h8" stroke="#6a68a0" strokeWidth="1.2" />
      </svg>
    ),
  },
  { name: "AnyDesk", badge: "2", active: true, icon: <AnyDeskLogo className="size-[37px]" /> },
  {
    name: "Sublime",
    icon: (
      <svg viewBox="0 0 18 36" className="h-9 w-[18px]">
        <path d="M18 0v9L8 5z" fill="#ffc93c" /><path d="M8 5l10 4-9 5z" fill="#7a2d8a" /><path d="M0 10l8-5 1 9z" fill="#e8465a" />
        <path d="M0 10l9 4-9 8z" fill="#e23b45" /><path d="M0 22l9-8 9 5-9 4z" fill="#f4523c" /><path d="M18 19v9l-9-5z" fill="#a8324a" />
        <path d="M9 23l9 5-9 4z" fill="#e2293b" /><path d="M0 28l9-5v9z" fill="#a03392" /><path d="M0 28l9 4-9 4z" fill="#4f2a8c" />
      </svg>
    ),
  },
  {
    name: "Brave",
    icon: (
      <svg viewBox="0 0 36 36" className="size-9">
        <rect width="36" height="36" rx="6" fill="#fa7a32" />
        <path d="M12 6.500h12l2.500 2 3-.5 1.500 4.500-1.500 2.500-1.500 6-2 4.500-8 5-8-5-2-4.500-1.500-6L5 12.500 6.500 8l3 .5z" fill="#fff" />
        <path d="M9.500 13l5.500 1.500 1 4-3-1.200zM26.500 13L21 14.500l-1 4 3-1.200zM15 22l3-1 3 1-3 2.500zM11 20l2 5 4 1.500 1-.5 1 .5 4-1.500 2-5-.5 5-3.500 3-3 1-3-1-3.500-3z" fill="#fa7a32" />
      </svg>
    ),
  },
  {
    name: "Telegram",
    icon: (
      <svg viewBox="0 0 36 36" className="size-9">
        <rect width="36" height="36" rx="6" fill="#239fdb" />
        <path d="M5 18L31 7l-1.500 22-8.500-5-5 5-2.500-8z" fill="#fff" /><path d="M13.500 21L29 9 17 22l-1.500 6z" fill="#c5dcea" />
      </svg>
    ),
  },
  {
    name: "Capturas",
    badge: "3",
    icon: (
      <svg viewBox="0 0 36 36" className="size-9">
        <rect width="36" height="36" rx="6" fill="#315a9b" />
        <path d="M17 8h10v2H17z" fill="#fff" /><rect x="5" y="11" width="26" height="18" rx="1.5" fill="#fff" />
        <circle cx="22" cy="20" r="5" fill="none" stroke="#315a9b" strokeWidth="1.6" /><path d="M9 14h4" stroke="#315a9b" strokeWidth="1.5" />
      </svg>
    ),
  },
];

function MintPanel() {
  return (
    <footer className="flex h-[51px] items-center border-t border-[#1c1c1c] bg-[#2e2e2e] text-white">
      <button aria-label="Menú" className="ml-1.5">
        <svg viewBox="0 0 40 40" className="size-10" fill="none" stroke="#eee">
          <circle cx="20" cy="20" r="18.2" strokeWidth="2.6" />
          <path d="M10.500 10.500V22a6.500 6.500 0 006.500 6.500h6.500A6.500 6.500 0 0030 22v-4.500a3.400 3.400 0 00-6.600 0V23M23.400 17.500a3.400 3.400 0 00-6.600 0V23" strokeWidth="2.9" />
        </svg>
      </button>
      <button aria-label="Mostrar escritorio" className="ml-[18px]">
        <svg viewBox="0 0 37 30" className="h-[30px] w-[37px]"><path d="M0 0h37v30H0z" fill="#88ae5c" /><path d="M0 0h37v6.500H0z" fill="#648a3f" /><circle cx="6" cy="4" r="1.3" fill="#fff" /></svg>
      </button>
      <div className="ml-4 flex h-full w-[569px] justify-between">
        {dockApps.map((a) => (
          <button
            key={a.name}
            aria-label={a.name}
            className={
              a.active
                ? "relative flex h-full w-[51px] items-center justify-center border-b-[3px] border-[#8fb467] bg-[#6c6c6c]"
                : "relative flex h-full w-[51px] items-center justify-center border-b-[3px] border-[#8fb467]"
            }
          >
            {a.icon}
            {a.badge && <CountBadge n={a.badge} />}
          </button>
        ))}
      </div>
      <div className="ml-auto flex items-center pb-px pr-[7px]">
        <AnyDeskLogo className="size-[30px]" />
        <svg viewBox="0 0 30 30" className="ml-2 size-[30px]">
          <path d="M8.500 0C13 0 12 1.500 16 1.500c8 0 13.500 6 12.500 14 0 2 1.500 3 1.500 6a8.500 8.500 0 01-12 7.500C8 31 1 24 1.500 15 1.500 12 0 11 0 8.500A8.500 8.500 0 018.500 0z" fill="#fff" />
          <path d="M19.500 10.500c-1.500-4-9-3.500-9 .5 0 4.500 9.500 2.500 9.500 7.500 0 4.500-8.500 4.500-10 .5" fill="none" stroke="#444" strokeWidth="3" />
        </svg>
        <svg viewBox="0 0 28 28" className="ml-3 size-7">
          <rect x="0" y="1" width="25" height="25" rx="4" fill="#289fdd" /><path d="M4 14l18-8-3 13-6-4z" fill="#fff" />
          <rect x="8" y="14" width="19" height="13" rx="4" fill="#e8423c" /><text x="17.500" y="24" fontSize="9" textAnchor="middle" fill="#fff">..23</text>
        </svg>
        <svg viewBox="0 0 16 20" className="ml-[13px] h-5 w-4"><rect x="1" width="14" height="20" rx="7" fill="#666" /><path d="M4.500 6.500l7 7L8 17V3l3.500 3.500-7 7" fill="none" stroke="#2e2e2e" strokeWidth="1.3" /></svg>
        <svg viewBox="0 0 20 20" className="ml-3 size-5" fill="none"><path d="M10 .8c3 2 6 2.700 9 2.700 0 8-3 13-9 16-6-3-9-8-9-16 3 0 6-.7 9-2.700z" fill="#eee" /><path d="M10 3.800c2 1.300 4 1.900 6 2-.5 5-2.500 8.500-6 10.700C6.500 14.300 4.500 10.800 4 5.800c2-.1 4-.7 6-2z" fill="#eee" stroke="#444" strokeWidth="1.3" /></svg>
        <svg viewBox="0 0 18 18" className="ml-[15px] size-[18px]"><path d="M3.500 1h11v3.500h-11z" fill="#fff" /><path d="M0 5.500h18V13H0z" fill="#eee" /><path d="M4 9.500h10.500V17H4z" fill="#4e9a06" stroke="#2e2e2e" /><path d="M9 11v4M7 13h4.500" stroke="#222" /></svg>
        <span className="ml-[7px] text-base font-bold leading-5">1</span>
        <svg viewBox="0 0 20 18" className="ml-3 h-[18px] w-5" fill="none" stroke="#eee" strokeWidth="2.2"><path d="M1 6c5.500-5.500 12.500-5.500 18 0" stroke="#888" /><path d="M4 9.500c3.500-3.500 8.500-3.500 12 0M7 13c2-2 4-2 6 0" /><circle cx="10" cy="15.8" r="1.5" fill="#eee" stroke="none" /></svg>
        <svg viewBox="0 0 18 18" className="ml-3.5 size-[18px]" fill="#eee"><path d="M5 1h12v12h-2V5H7v10H5z" /><circle cx="4" cy="15" r="3" /><circle cx="14" cy="14" r="3" /></svg>
        <svg viewBox="0 0 18 20" className="ml-4 h-5 w-[18px]"><path d="M4 1h6v2h3v6M9 19H1V3h3V1" fill="none" stroke="#eee" strokeWidth="2" /><path d="M4 6.500h6M4 10h6M4 13.500h5M4 16h4" stroke="#eee" strokeWidth="1.8" /><path d="M14 9l-4 6h3l-1 5 6-7h-3z" fill="#999" /></svg>
        <time className="ml-2.5 text-base font-bold leading-5">23:29</time>
      </div>
    </footer>
  );
}

export default function App() {
  return (
    <div className="flex min-h-screen flex-col bg-[#e8e8e6] font-['Noto_Sans','Open_Sans',sans-serif]">
      <TitleBar />
      <TabBar />
      <div className="flex flex-1 flex-col border-x border-[#b4b4b0] bg-white px-[5px] pb-px pt-px">
        <div className="flex flex-1 bg-linear-to-b from-[#808080] from-75% to-[#5f5f5f] px-[125px]">
          <RemoteDesktop />
        </div>
      </div>
      <StatusBar />
      <MintPanel />
    </div>
  );
}
